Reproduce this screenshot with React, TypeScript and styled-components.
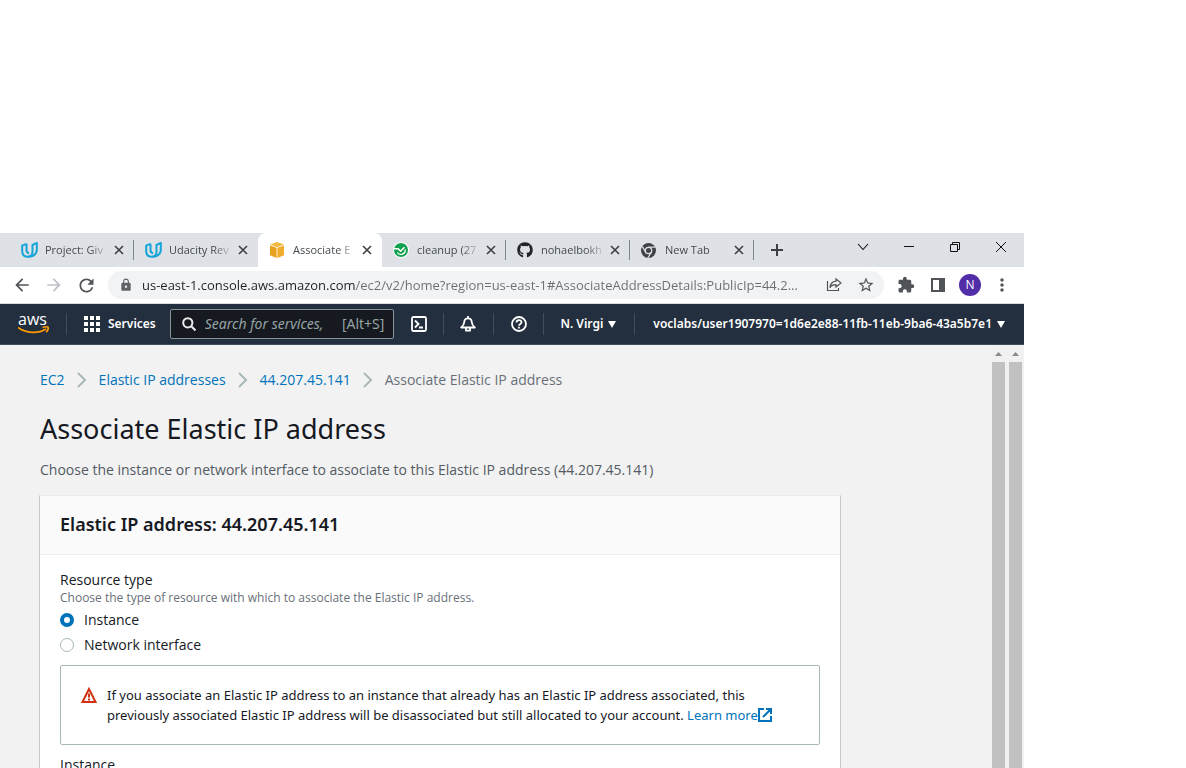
import React from 'react';
import styled, { createGlobalStyle, css } from 'styled-components';
import { FaGithub } from 'react-icons/fa';
import { MdLock, MdExtension, MdStarBorder, MdRefresh, MdArrowBack, MdArrowForward, MdMoreVert } from 'react-icons/md';

const uiFont = '"Open Sans", "Noto Sans", sans-serif';
const awsFont = '"Noto Sans", "Open Sans", sans-serif';

const Global = createGlobalStyle`
  * { box-sizing: border-box; }
  body { margin: 0; background: #fff; }
  button { border: 0; padding: 0; background: none; font: inherit; color: inherit; cursor: pointer; }
  svg { display: block; flex: none; }
`;

const Page = styled.div`
  height: 100vh;
  padding: 233px 162px 0 0;
  overflow: hidden;
  display: flex;
  flex-direction: column;
`;

const Browser = styled.div`
  flex: 1;
  min-height: 0;
  display: flex;
  flex-direction: column;
`;

const TabStrip = styled.div`
  display: flex;
  flex: none;
  height: 34px;
  padding-left: 10px;
  background: #dee1e6;
  font: 11px/16px ${uiFont};
  color: #45494d;
`;

const Tab = styled.div<{ $active?: boolean; $line?: boolean }>`
  display: flex;
  align-items: center;
  width: 124px;
  padding: 0 10px 0 11px;
  position: relative;
  ${p => p.$active && css`
    background: #fff;
    border-radius: 8px 8px 0 0;
  `}
  ${p => p.$line && css`
    &::after {
      content: '';
      position: absolute;
      right: 0;
      top: 7px;
      height: 20px;
      width: 1px;
      background: #80868b;
    }
  `}
`;

const TabIcon = styled.span`
  display: flex;
  width: 17px;
  margin-right: 7px;
`;

const TabTitle = styled.span`
  flex: 1;
  overflow: hidden;
  white-space: nowrap;
  mask-image: linear-gradient(90deg, #000 70%, transparent);
`;

const TabClose = styled.button`
  margin-left: 5px;
  color: #3c4043;
`;

const NewTab = styled.button`
  width: 46px;
  display: flex;
  align-items: center;
  justify-content: center;
  color: #3c4043;
`;

const WindowButtons = styled.div`
  display: flex;
  margin-left: auto;
  height: 28px;
  color: #111;
`;

const WindowButton = styled.button`
  width: 46px;
  display: flex;
  align-items: center;
  justify-content: center;
`;

const Toolbar = styled.div`
  flex: none;
  height: 37px;
  display: flex;
  align-items: center;
  padding: 0 6px;
  border-bottom: 1px solid #dadce0;
  color: #5f6368;
`;

const ToolButton = styled.button<{ $dim?: boolean }>`
  width: 32px;
  height: 28px;
  flex: none;
  display: flex;
  align-items: center;
  justify-content: center;
  color: ${p => (p.$dim ? '#bdc1c6' : '#505458')};
`;

const NavButtons = styled.div`
  display: flex;
  width: 102px;
`;

const Omnibox = styled.div`
  flex: 1;
  min-width: 0;
  height: 28px;
  display: flex;
  align-items: center;
  padding: 0 2px 0 11px;
  margin-right: 6px;
  border-radius: 14px;
  background: #f1f3f4;
`;

const Address = styled.input`
  flex: 1;
  min-width: 0;
  height: 24px;
  margin-left: 9px;
  padding: 0;
  border: 0;
  outline: 0;
  font: 13px/24px ${uiFont};
  background: linear-gradient(90deg, #202124 214px, #6a6e73 214px);
  background-clip: text;
  -webkit-background-clip: text;
  color: transparent;
`;

const Avatar = styled.button`
  width: 22px;
  height: 22px;
  margin: 0 5px;
  border-radius: 50%;
  background: #512da8;
  color: #fff;
  font: 12px/22px ${uiFont};
`;

const ConsoleNav = styled.nav`
  flex: none;
  height: 41px;
  display: flex;
  align-items: center;
  padding: 0 19px 0 18px;
  background: #232f3e;
  border-bottom: 1px solid #414d5c;
  color: #fff;
  font: 600 12px/16px ${awsFont};
`;

const Logo = styled.a`
  width: 31px;
  height: 22px;
  display: flex;
  flex-direction: column;
  color: #fff;
  text-decoration: none;
  font: 500 16px/12px ${uiFont};
`;

const Divider = styled.span<{ $before?: number; $after?: number }>`
  width: 1px;
  height: 22px;
  flex: none;
  background: #414d5c;
  margin: 0 ${p => p.$after ?? 16}px 0 ${p => p.$before ?? 16}px;
`;

const NavButton = styled.button<{ $gap?: number }>`
  display: flex;
  align-items: center;
  gap: ${p => p.$gap ?? 8}px;
  white-space: nowrap;
`;

const Search = styled.label`
  flex: 1;
  min-width: 0;
  height: 30px;
  margin: 0 17px 0 14px;
  padding: 0 9px 0 11px;
  display: flex;
  align-items: center;
  gap: 9px;
  border: 1px solid #879596;
  border-radius: 2px;
  background: #16191f;
  color: #95a5a6;
  font: 14px/20px ${awsFont};
`;

const SearchInput = styled.input`
  flex: 1;
  min-width: 0;
  padding: 0;
  border: 0;
  outline: 0;
  background: none;
  color: #fff;
  font: italic 14px/20px ${awsFont};
  &::placeholder { color: #95a5a6; opacity: 1; }
`;

const Body = styled.div`
  flex: 1;
  min-height: 0;
  display: flex;
  background: #f2f2f2;
`;

const Main = styled.main`
  flex: 1;
  min-width: 0;
  padding: 25px 40px 0;
  overflow: hidden;
  color: #16191f;
  font: 14px/20px ${uiFont};
`;

const ScrollBar = styled.div`
  width: 17px;
  display: flex;
  flex-direction: column;
  align-items: center;
  padding-top: 7px;
  background: #f1f1f1;
`;

const Thumb = styled.div`
  flex: 1;
  width: 13px;
  margin-top: 6px;
  background: #c1c1c1;
`;

const Crumbs = styled.nav`
  display: flex;
  align-items: center;
  gap: 11px;
  color: #687078;
`;

const Link = styled.a`
  color: #0073bb;
  text-decoration: none;
`;

const Title = styled.h1`
  margin: 21px 0 0;
  font: 400 27px/36px ${awsFont};
`;

const Intro = styled.p`
  margin: 13px 0 0;
  color: #545b64;
`;

const Card = styled.section`
  max-width: 802px;
  margin: 15px -1px 0;
  border: 1px solid #c6caca;
  border-top-color: #eaeded;
  background: #fff;
`;

const CardTitle = styled.h2`
  margin: 0;
  padding: 16px 20px 18px;
  border-bottom: 1px solid #eaeded;
  background: #fafafa;
  font: 600 18px/24px ${awsFont};
`;

const CardBody = styled.div`
  padding: 15px 20px 40px;
`;

const Fieldset = styled.fieldset`
  margin: 0;
  padding: 0;
  border: 0;
`;

const Legend = styled.legend`
  padding: 0;
`;

const Description = styled.p`
  margin: 0 0 4px;
  color: #687078;
  font-size: 12px;
  line-height: 16px;
`;

const Option = styled.label`
  display: flex;
  align-items: center;
  gap: 10px;
  margin-bottom: 5px;
`;

const Radio = styled.input`
  appearance: none;
  width: 14px;
  height: 14px;
  margin: 0;
  border: 1px solid #aab7b8;
  border-radius: 50%;
  background: #fff;
  &:checked { border: 4px solid #0073bb; }
`;

const Alert = styled.div`
  display: flex;
  gap: 10px;
  margin: 5px 0 10px;
  padding: 19px 19px 19px 20px;
  border: 1px solid #aab7b8;
  border-radius: 2px;
  font: 13px/20px ${awsFont};
`;

const AlertText = styled.p`
  margin: 0;
`;

const ExternalIcon = styled.svg`
  display: inline-block;
  vertical-align: -2px;
`;

const FieldLabel = styled.div``;

const CloseGlyph = () => (
  <svg width="10" height="10" viewBox="0 0 10 10" stroke="currentColor" strokeWidth="1.6"><path d="M1 1l8 8M9 1L1 9" /></svg>
);

const Udacity = () => (
  <svg width="17" height="16" viewBox="0 0 17 16" fill="none" stroke="#14a5d8" strokeWidth="2" strokeLinejoin="round">
    <path d="M5.500 1.800L1.200 3.600V9c0 3.500 2 5.700 5.300 5.700 3.200 0 5-2 5-5V2.800l4.300-1.800v6.500c0 3.800-2.800 6.500-7.300 7.200" />
    <path d="M5.500 1.800V8c0 2 .8 3 2.600 3.300" />
  </svg>
);

const Cube = () => (
  <svg width="16" height="16" viewBox="0 0 16 16">
    <path d="M8 0l7 2.600L8 5.200 1 2.600z" fill="#f4b942" />
    <path d="M1 3.400l6.600 2.400V16L1 13.200z" fill="#e9a21f" />
    <path d="M15 3.400L8.400 5.800V16l6.600-2.800z" fill="#f0ad2d" />
  </svg>
);

const Circle = () => (
  <svg width="16" height="16" viewBox="0 0 16 16" fill="none">
    <circle cx="8" cy="8" r="8" fill="#fff" />
    <circle cx="8" cy="8" r="7" fill="#12a150" />
    <path d="M0 6.800h5.200l2.300 2.400 4-4" stroke="#fff" strokeWidth="1.500" />
    <path d="M4.300 10.500a4.400 4.400 0 0 0 8-3" stroke="#fff" strokeWidth="1.200" />
  </svg>
);

const Chrome = () => (
  <svg width="15" height="15" viewBox="0 0 16 16" fill="none">
    <circle cx="8" cy="8" r="8" fill="#3f4246" />
    <circle cx="8" cy="8" r="3.400" fill="#3f4246" stroke="#dee1e6" strokeWidth="1.400" />
    <path d="M8 4.500h7.300M5 9.900L1.300 3.600M11 9.900L7.200 16" stroke="#dee1e6" strokeWidth="1.300" />
  </svg>
);

const Caret = () => (
  <svg width="8" height="7" viewBox="0 0 8 7" fill="currentColor"><path d="M0 0h8L4 7z" /></svg>
);

const Grid = () => (
  <svg width="16" height="16" viewBox="0 0 16 16" fill="currentColor">
    {[0, 6, 12].map(y => [0, 6, 12].map(x => <rect key={`${x}-${y}`} x={x} y={y} width="4" height="4" />))}
  </svg>
);

const Chevron = () => (
  <svg width="12" height="16" viewBox="0 0 12 16" fill="none" stroke="#aab7b8" strokeWidth="2"><path d="M2 1l7 7-7 7" /></svg>
);

const tabs = [
  { title: 'Project: Giv', icon: <Udacity />, line: true },
  { title: 'Udacity Rev', icon: <Udacity /> },
  { title: 'Associate E', icon: <Cube />, active: true },
  { title: 'cleanup (27', icon: <Circle />, line: true },
  { title: 'nohaelbokh', icon: <FaGithub size={16} color="#202327" />, line: true },
  { title: 'New Tab', icon: <Chrome />, line: true },
];

export default function App() {
  return (
    <Page>
      <Global />
      <Browser>
        <TabStrip>
          {tabs.map(t => (
            <Tab key={t.title} $active={t.active} $line={t.line}>
              <TabIcon>{t.icon}</TabIcon>
              <TabTitle>{t.title}</TabTitle>
              <TabClose aria-label="Close tab"><CloseGlyph /></TabClose>
            </Tab>
          ))}
          <NewTab aria-label="New tab">
            <svg width="12" height="12" viewBox="0 0 12 12" stroke="currentColor" strokeWidth="2"><path d="M6 0v12M0 6h12" /></svg>
          </NewTab>
          <WindowButtons>
            <WindowButton aria-label="Search tabs">
              <svg width="12" height="8" viewBox="0 0 12 8" fill="none" stroke="currentColor" strokeWidth="1.1"><path d="M1 1l5 5.500L11 1" /></svg>
            </WindowButton>
            <WindowButton aria-label="Minimize">
              <svg width="10" height="2" viewBox="0 0 10 2"><path d="M0 0h10v1H0z" fill="currentColor" /></svg>
            </WindowButton>
            <WindowButton aria-label="Restore">
              <svg width="10" height="10" viewBox="0 0 10 10" fill="none" stroke="currentColor"><path d="M.5 2.500h7v7h-7zM2.500 2.500v-2h7v7h-2" /></svg>
            </WindowButton>
            <WindowButton aria-label="Close">
              <svg width="10" height="10" viewBox="0 0 10 10" stroke="currentColor"><path d="M0 0l10 10M10 0L0 10" /></svg>
            </WindowButton>
          </WindowButtons>
        </TabStrip>

        <Toolbar>
          <NavButtons>
            <ToolButton aria-label="Back"><MdArrowBack size={20} /></ToolButton>
            <ToolButton aria-label="Forward" $dim><MdArrowForward size={20} /></ToolButton>
            <ToolButton aria-label="Reload"><MdRefresh size={21} /></ToolButton>
          </NavButtons>
          <Omnibox>
            <MdLock size={14} />
            <Address
              aria-label="Address"
              readOnly
              value="us-east-1.console.aws.amazon.com/ec2/v2/home?region=us-east-1#AssociateAddressDetails:PublicIp=44.2..."
            />
            <ToolButton aria-label="Share">
              <svg width="16" height="16" viewBox="0 0 16 16" fill="none" stroke="currentColor" strokeWidth="1.2">
                <path d="M1.500 4v9.500h11V11M10 2l5 4-5 4V7.700C7 7.700 5 8.500 4 10.700 4.300 7 6.500 4.600 10 4.200z" />
              </svg>
            </ToolButton>
            <ToolButton aria-label="Bookmark"><MdStarBorder size={18} /></ToolButton>
          </Omnibox>
          <ToolButton aria-label="Extensions"><MdExtension size={18} /></ToolButton>
          <ToolButton aria-label="Side panel">
            <svg width="14" height="14" viewBox="0 0 14 14" fill="currentColor"><path d="M0 0h14v14H0zM2 2v10h6V2z" fillRule="evenodd" /></svg>
          </ToolButton>
          <Avatar aria-label="Profile">N</Avatar>
          <ToolButton aria-label="Menu"><MdMoreVert size={20} /></ToolButton>
        </Toolbar>

        <ConsoleNav>
          <Logo href="#">
            aws
            <svg width="31" height="9" viewBox="0 0 31 9" fill="none" stroke="#f90" strokeWidth="1.7">
              <path d="M0 2.500C8 8.500 20 9 28 4M24.500 2.500c3-.8 5-.8 5.500-.2s-.2 3-1.800 5" />
            </svg>
          </Logo>
          <Divider $before={17} $after={17} />
          <NavButton><Grid />Services</NavButton>
          <Search>
            <svg width="14" height="14" viewBox="0 0 14 14" fill="none" stroke="#eaeded" strokeWidth="2"><circle cx="5.800" cy="5.800" r="4.600" /><path d="M9 9l4.500 4.500" /></svg>
            <SearchInput aria-label="Search" placeholder="Search for services," />
            <span>[Alt+S]</span>
          </Search>
          <NavButton aria-label="CloudShell">
            <svg width="16" height="16" viewBox="0 0 16 16" fill="none" stroke="currentColor" strokeWidth="1.800"><rect x="1" y="1" width="14" height="14" rx="1.500" /><path d="M4 4.500L7.500 8 4 11.500M8 11.500h4" /></svg>
          </NavButton>
          <Divider />
          <NavButton aria-label="Notifications">
            <svg width="16" height="16" viewBox="0 0 16 16" fill="none" stroke="currentColor" strokeWidth="1.800" strokeLinejoin="round"><path d="M8 0v2M8 2.300C5.500 2.300 4.300 4 4.200 6.300 4 8.700 3 10 1.200 11.500h13.600C13 10 12 8.700 11.800 6.300 11.700 4 10.500 2.300 8 2.300zM6 12v2.700h4V12" /></svg>
          </NavButton>
          <Divider $before={17} $after={17} />
          <NavButton aria-label="Help">
            <svg width="16" height="16" viewBox="0 0 16 16" fill="none" stroke="currentColor" strokeWidth="1.800"><circle cx="8" cy="8" r="7" /><path d="M5.500 6.500C5.500 3.300 10.500 3.400 10.500 6.200 10.500 8 8 7.900 8 9.700M8 10.800v1.700" /></svg>
          </NavButton>
          <Divider />
          <NavButton $gap={5}>N. Virgi <Caret /></NavButton>
          <Divider $before={18} $after={18} />
          <NavButton $gap={5}>voclabs/user1907970=1d6e2e88-11fb-11eb-9ba6-43a5b7e1 <Caret /></NavButton>
        </ConsoleNav>

        <Body>
          <Main>
            <Crumbs aria-label="Breadcrumb">
              <Link href="#">EC2</Link>
              <Chevron />
              <Link href="#">Elastic IP addresses</Link>
              <Chevron />
              <Link href="#">44.207.45.141</Link>
              <Chevron />
              <span>Associate Elastic IP address</span>
            </Crumbs>
            <Title>Associate Elastic IP address</Title>
            <Intro>Choose the instance or network interface to associate to this Elastic IP address (44.207.45.141)</Intro>
            <Card>
              <CardTitle>Elastic IP address: 44.207.45.141</CardTitle>
              <CardBody>
                <Fieldset>
                  <Legend>Resource type</Legend>
                  <Description>Choose the type of resource with which to associate the Elastic IP address.</Description>
                  <Option><Radio type="radio" name="resource" defaultChecked />Instance</Option>
                  <Option><Radio type="radio" name="resource" />Network interface</Option>
                </Fieldset>
                <Alert>
                  <svg width="16" height="20" viewBox="0 0 16 20" fill="none" stroke="#d13212" strokeWidth="2"><path d="M8 4L1.500 17h13zM8 8.500v4M8 13.500v2" /></svg>
                  <AlertText>
                    If you associate an Elastic IP address to an instance that already has an Elastic IP address associated, this
                    <br />
                    previously associated Elastic IP address will be disassociated but still allocated to your account.{' '}
                    <Link href="#">
                      Learn more
                      <ExternalIcon width="14" height="14" viewBox="0 0 14 14" fill="none" stroke="currentColor" strokeWidth="2"><path d="M6 1H1v12h12V8M8 1h5v5M13 1L5 9" /></ExternalIcon>
                    </Link>
                  </AlertText>
                </Alert>
                <FieldLabel>Instance</FieldLabel>
              </CardBody>
            </Card>
          </Main>
          {['inner', 'outer'].map(name => (
            <ScrollBar key={name}>
              <svg width="7" height="4" viewBox="0 0 7 4"><path d="M3.500 0L7 4H0z" fill="#8a8a8a" /></svg>
              <Thumb />
            </ScrollBar>
          ))}
        </Body>
      </Browser>
    </Page>
  );
}
